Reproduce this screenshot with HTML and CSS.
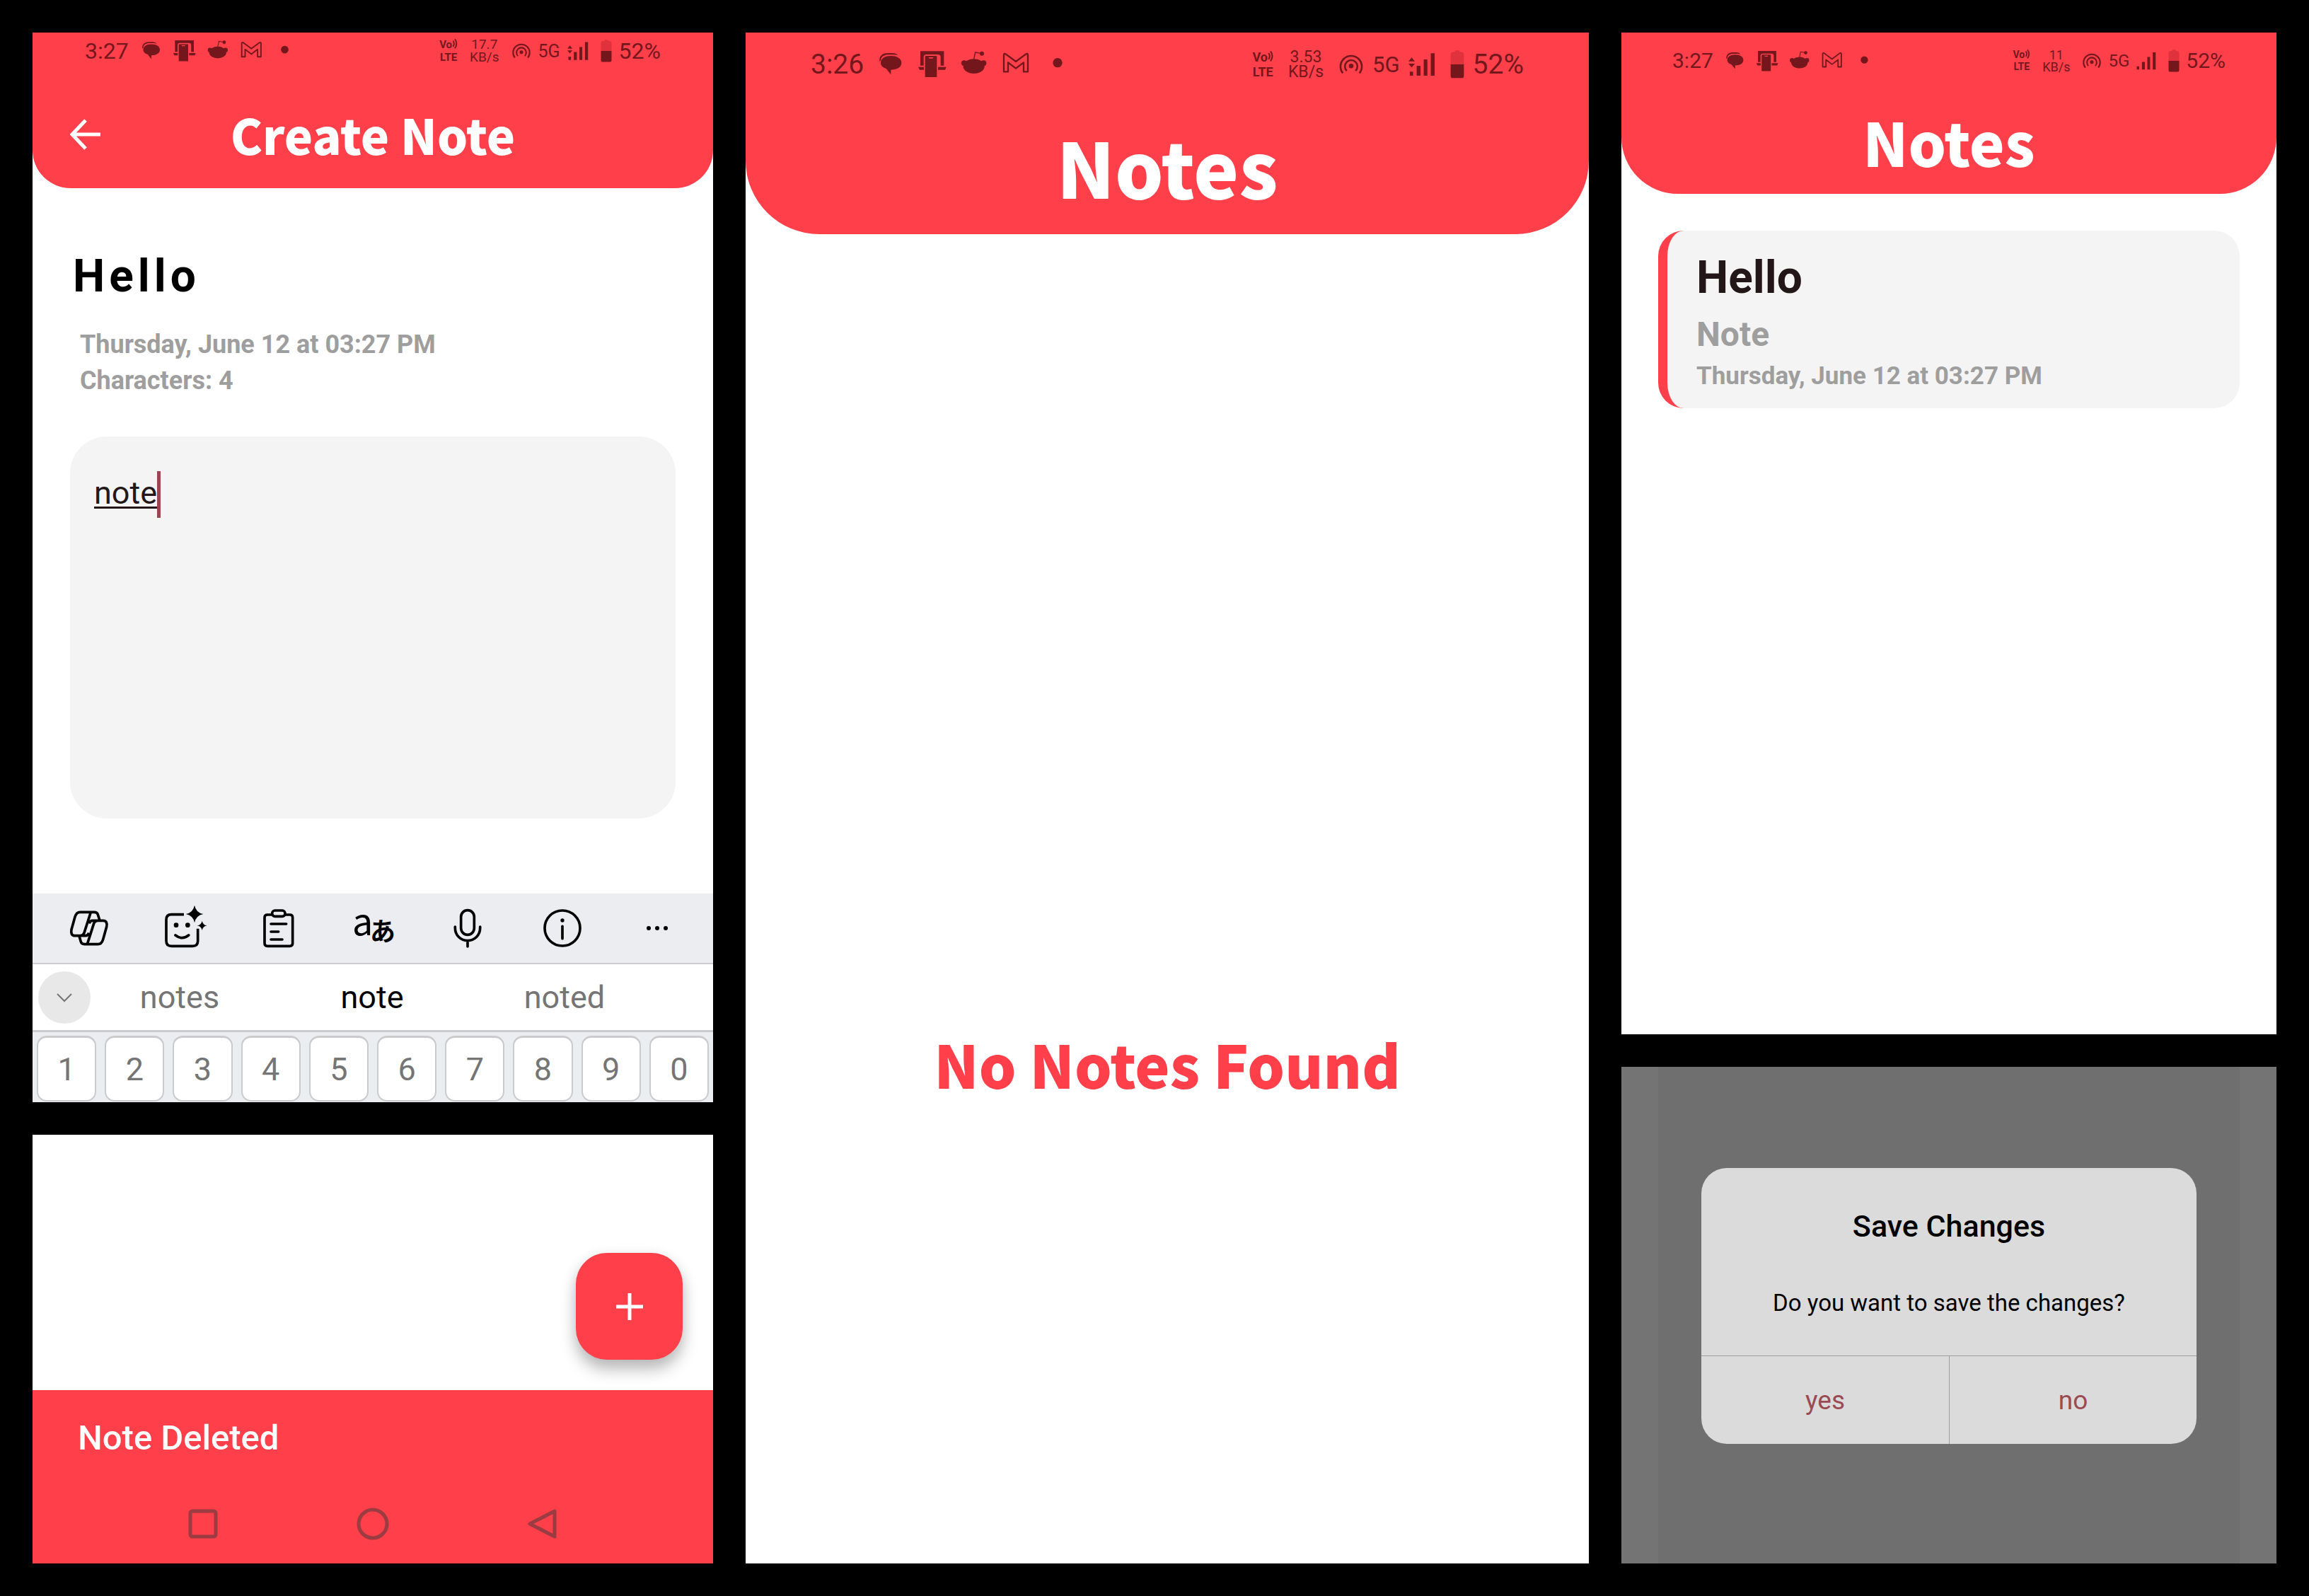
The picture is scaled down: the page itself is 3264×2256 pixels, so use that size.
FILE: index.html
```html
<!DOCTYPE html>
<html lang="en">
<head>
<meta charset="utf-8">
<title>Notes app screens</title>
<link rel="stylesheet" href="styles.css">
</head>
<body>
<svg class="sprite" aria-hidden="true">
  <symbol id="notifications" viewBox="312 36 783 120">
    <path d="M316 84C313 62 328 48 350 48H372Q387 49 394 58Q386 55 376 55H350C332 57 321 66 322 78Z"/>
    <path d="M364 60C392 60 409 72 409 90C409 107 392 119 364 119V139L344 114C328 109 321 100 321 90C321 72 336 60 364 60Z"/>
    <path d="M489 40H589V101H575V66Q575 54 563 54H515Q503 54 503 66V101H489ZM480 107H504V119H486ZM564 107H599L594 119H564Z"/>
    <path d="M512 60H556Q559 60 559 63V150H509V63Q509 60 512 60ZM524 66Q524 71 529 71H539Q544 71 544 66Z" fill-rule="evenodd"/>
    <ellipse cx="716" cy="104" rx="45" ry="31"/>
    <circle cx="675" cy="91" r="12"/><circle cx="757" cy="91" r="12"/><circle cx="750" cy="50" r="9"/>
    <path d="M716 74L722 45L746 49" fill="none" stroke="currentColor" stroke-width="4"/>
    <path d="M843 127V56Q843 49 851 52L894 84L937 52Q945 49 945 56V127H927V88L894 113L861 88V127Z" fill="none" stroke="currentColor" stroke-width="7" stroke-linejoin="round"/>
    <circle cx="1071" cy="89" r="20"/>
  </symbol>
  <symbol id="waves" viewBox="0 0 24 48">
    <path d="M4 12Q13 24 4 38M12 4Q27 24 12 46" fill="none" stroke="currentColor" stroke-width="6"/>
  </symbol>
  <symbol id="hotspot" viewBox="430 48 110 90">
    <circle cx="485" cy="100" r="10"/>
    <path d="M449 131A46 46 0 1 1 521 131M466 121A27 27 0 1 1 504 121" fill="none" stroke="currentColor" stroke-width="8"/>
  </symbol>
  <symbol id="signal" viewBox="714 38 118 102">
    <path d="M720 121H734V139H720ZM750 95H767V139H750ZM781 67H797V139H781ZM812 40H829V139H812Z"/>
  </symbol>
  <symbol id="signal-data" viewBox="714 38 118 102">
    <path d="M720 121H734V139H720ZM750 95H767V139H750ZM781 67H797V139H781ZM812 40H829V139H812ZM728 59L742 76H714ZM714 86H742L728 103Z"/>
  </symbol>
  <symbol id="battery" viewBox="892 28 62 124">
    <path d="M913 36V33Q913 29 917 29H929Q933 29 933 33V36H940Q952 36 952 48V92H894V48Q894 36 906 36Z" fill="#e0323c"/>
    <path d="M894 90H952V140Q952 150 942 150H904Q894 150 894 140Z"/>
  </symbol>
</svg>

<main class="board">
  <div class="stack">
    <section class="screen editor">
      <header class="header header-small">
        <div class="status">
          <span class="clock">3:27</span>
          <svg class="i-notes"><use href="#notifications"/></svg>
          <div class="status-end">
            <span class="tiny volte"><span>Vo<svg class="i-waves"><use href="#waves"/></svg></span><span>LTE</span></span>
            <span class="tiny speed"><span>17.7</span><span>KB/s</span></span>
            <span class="pair"><svg class="i-hotspot"><use href="#hotspot"/></svg><span class="gen">5G</span><svg class="i-signal"><use href="#signal-data"/></svg></span>
            <span class="pair"><svg class="i-battery"><use href="#battery"/></svg><span class="clock">52%</span></span>
          </div>
        </div>
        <div class="title-row">
          <button class="back" aria-label="Back"><svg viewBox="0 0 44 44"><path d="M43 22H4M22 2L3 22L22 42"/></svg></button>
          <h1>Create Note</h1>
        </div>
      </header>
      <div class="editor-body">
        <h2 class="note-title">Hello</h2>
        <p class="meta">Thursday, June 12 at 03:27 PM<br>Characters: 4</p>
        <div class="field">
          <textarea aria-label="Note text" spellcheck="false">note</textarea>
          <span class="caret"></span>
        </div>
      </div>
      <div class="keyboard">
        <div class="tools">
          <button aria-label="Copilot"><svg viewBox="45 66 180 180"><path d="M145 88L117 176Q113 188 101 188H78Q58 188 63 162L78 108Q84 88 100 88H160Q172 88 175 98L182 120M130 224L158 136Q162 124 174 124H197Q217 124 212 150L197 204Q191 224 175 224H118Q106 224 103 214L96 190M174 124H152Q142 124 138 136M101 188H123Q133 188 137 176"/></svg></button>
          <button aria-label="Stickers"><svg viewBox="447 66 180 180"><path d="M540 98H487Q465 98 465 120V210Q465 232 487 232H577Q599 232 599 210V158"/><path d="M504 186Q532 208 560 186" stroke-linecap="round"/><g class="solid"><circle cx="507" cy="143" r="10"/><circle cx="556" cy="143" r="10"/><path d="M585 59Q591 90 622 96Q591 102 585 133Q579 102 548 96Q579 90 585 59ZM617 125Q620 142 638 145Q620 148 617 165Q614 148 596 145Q614 142 617 125Z"/></g></svg></button>
          <button aria-label="Clipboard"><svg viewBox="849 66 180 180"><path d="M913 99H894Q882 99 882 111V220Q882 232 894 232H989Q1001 232 1001 220V111Q1001 99 989 99H969"/><rect x="914" y="81" width="55" height="25" rx="12"/><path d="M909 138H974M909 171H941M909 204H957" stroke-linecap="round"/></svg></button>
          <button aria-label="Translate"><svg viewBox="1251 66 180 180"><text class="latin" x="1254" y="187">a</text><text class="kana" x="1329" y="211">あ</text></svg></button>
          <button aria-label="Voice input"><svg viewBox="0 0 180 180"><rect x="62" y="14" width="56" height="104" rx="28"/><path d="M37 84V90A53 53 0 0 0 143 90V84M90 143V168" stroke-linecap="round"/></svg></button>
          <button aria-label="Information"><svg viewBox="0 0 180 180"><circle cx="90" cy="90" r="75"/><path d="M90 82V134" stroke-linecap="round"/><circle class="solid" cx="90" cy="57" r="8"/></svg></button>
          <button aria-label="More"><svg viewBox="0 0 180 180"><g class="solid"><circle cx="54" cy="90" r="9"/><circle cx="90" cy="90" r="9"/><circle cx="126" cy="90" r="9"/></g></svg></button>
        </div>
        <div class="suggestions">
          <button class="collapse" aria-label="Collapse"><svg viewBox="0 0 24 14"><path d="M2 2L12 12L22 2"/></svg></button>
          <button class="word">notes</button>
          <button class="word active">note</button>
          <button class="word">noted</button>
        </div>
        <div class="keys">
          <button>1</button><button>2</button><button>3</button><button>4</button><button>5</button>
          <button>6</button><button>7</button><button>8</button><button>9</button><button>0</button>
        </div>
      </div>
    </section>

    <section class="screen deleted">
      <div class="fab-area">
        <button class="fab" aria-label="Add note"><svg viewBox="0 0 38 38"><path d="M19 0V38M0 19H38"/></svg></button>
      </div>
      <footer class="snackbar">
        <p>Note Deleted</p>
        <nav class="system-nav">
          <button aria-label="Recent apps"><svg viewBox="0 0 48 48"><rect x="6" y="6" width="36" height="36" rx="3"/></svg></button>
          <button aria-label="Home"><svg viewBox="0 0 48 48"><circle cx="24" cy="24" r="20"/></svg></button>
          <button aria-label="Back"><svg viewBox="0 0 48 48"><path d="M40 6V42L5 24Z"/></svg></button>
        </nav>
      </footer>
    </section>
  </div>

  <section class="screen empty">
    <header class="header header-large">
      <div class="status">
        <span class="clock">3:26</span>
        <svg class="i-notes"><use href="#notifications"/></svg>
        <div class="status-end">
          <span class="tiny volte"><span>Vo<svg class="i-waves"><use href="#waves"/></svg></span><span>LTE</span></span>
          <span class="tiny speed"><span>3.53</span><span>KB/s</span></span>
          <span class="pair"><svg class="i-hotspot"><use href="#hotspot"/></svg><span class="gen">5G</span><svg class="i-signal"><use href="#signal-data"/></svg></span>
          <span class="pair"><svg class="i-battery"><use href="#battery"/></svg><span class="clock">52%</span></span>
        </div>
      </div>
      <div class="title-row"><h1>Notes</h1></div>
    </header>
    <p class="empty-text">No Notes Found</p>
  </section>

  <div class="stack">
    <section class="screen list">
      <header class="header header-medium">
        <div class="status">
          <span class="clock">3:27</span>
          <svg class="i-notes"><use href="#notifications"/></svg>
          <div class="status-end">
            <span class="tiny volte"><span>Vo<svg class="i-waves"><use href="#waves"/></svg></span><span>LTE</span></span>
            <span class="tiny speed"><span>11</span><span>KB/s</span></span>
            <span class="pair"><svg class="i-hotspot"><use href="#hotspot"/></svg><span class="gen">5G</span><svg class="i-signal"><use href="#signal"/></svg></span>
            <span class="pair"><svg class="i-battery"><use href="#battery"/></svg><span class="clock">52%</span></span>
          </div>
        </div>
        <div class="title-row"><h1>Notes</h1></div>
      </header>
      <article class="card">
        <h2>Hello</h2>
        <p class="excerpt">Note</p>
        <p class="date">Thursday, June 12 at 03:27 PM</p>
      </article>
    </section>

    <section class="screen confirm">
      <div class="backdrop">
        <div class="dialog" role="dialog" aria-labelledby="save-title">
          <div class="dialog-text">
            <h2 id="save-title">Save Changes</h2>
            <p>Do you want to save the changes?</p>
          </div>
          <div class="dialog-actions">
            <button>yes</button>
            <button>no</button>
          </div>
        </div>
      </div>
    </section>
  </div>
</main>
</body>
</html>
```
FILE: styles.css
```css
:root {
  --red: #ff3f4a;
  --status: #74171d;
  --gray: #9e9e9e;
  --key-line: #cbcbcd;
  --panel: #f4f4f4;
}

* { box-sizing: border-box; }

body {
  margin: 0;
  background: #000;
  color: #000;
  font-family: Roboto, "Liberation Sans", sans-serif;
}

h1, h2, p { margin: 0; }

button {
  margin: 0;
  padding: 0;
  border: 0;
  background: none;
  color: inherit;
  font: inherit;
}

svg { display: block; fill: currentColor; }

.sprite { display: none; }

.board {
  display: grid;
  grid-template-columns: 962fr 1192fr 926fr;
  gap: 46px;
  min-height: 100vh;
  padding: 46px;
}

.stack { display: flex; flex-direction: column; gap: 46px; }

.screen { display: flex; flex-direction: column; background: #fff; }

.deleted, .confirm { flex: 1; }

/* Headers and status bars */

.header {
  display: flex;
  flex-direction: column;
  background: var(--red);
  color: #fff;
}

.header-small {
  --clock: 32px; --tiny: 19px; --tiny-bold: 15px; --tiny-line: 18px; --gen: 25px;
  --gap: 17px; --gap-small: 10px;
  --notes-w: 211px; --notes-h: 32px; --hot-w: 28px; --hot-h: 24px;
  --sig-w: 30px; --sig-h: 26px; --bat-w: 16px; --bat-h: 32px;
  border-radius: 0 0 54px 54px;
}

.header-large {
  --clock: 39px; --tiny: 23px; --tiny-bold: 18px; --tiny-line: 21px; --gen: 31px;
  --gap: 21px; --gap-small: 12px;
  --notes-w: 261px; --notes-h: 40px; --hot-w: 36px; --hot-h: 30px;
  --sig-w: 38px; --sig-h: 34px; --bat-w: 20px; --bat-h: 40px;
  border-radius: 0 0 104px 104px;
}

.header-medium {
  --clock: 30px; --tiny: 18px; --tiny-bold: 14px; --tiny-line: 17px; --gen: 24px;
  --gap: 17px; --gap-small: 9px;
  --notes-w: 203px; --notes-h: 31px; --hot-w: 28px; --hot-h: 24px;
  --sig-w: 29px; --sig-h: 26px; --bat-w: 16px; --bat-h: 32px;
  border-radius: 0 0 80px 80px;
}

.status {
  display: flex;
  align-items: center;
  gap: var(--gap);
  color: var(--status);
}

.header-small .status { height: 52px; padding: 0 74px; }
.header-large .status { height: 90px; padding: 0 92px; }
.header-medium .status { height: 80px; padding: 0 72px; }

.status-end {
  display: flex;
  align-items: center;
  gap: var(--gap);
  margin-left: auto;
}

.clock { font-size: var(--clock); line-height: 1; }
.gen { font-size: var(--gen); line-height: 1; }
.pair { display: flex; align-items: center; gap: var(--gap-small); }

.tiny {
  display: flex;
  flex-direction: column;
  align-items: center;
  font-size: var(--tiny);
  line-height: var(--tiny-line);
}

.tiny > span { display: flex; }
.volte { font-size: var(--tiny-bold); font-weight: 700; }

.i-waves { width: 8px; height: var(--tiny-bold); }
.i-notes { width: var(--notes-w); height: var(--notes-h); }
.i-hotspot { width: var(--hot-w); height: var(--hot-h); }
.i-signal { width: var(--sig-w); height: var(--sig-h); }
.i-battery { width: var(--bat-w); height: var(--bat-h); }

.title-row {
  display: grid;
  grid-template-columns: 1fr auto 1fr;
  align-items: center;
}

.title-row h1 { grid-column: 2; }

h1, .empty-text {
  font-family: "Noto Sans CJK SC", "Liberation Sans", sans-serif;
  font-weight: 900;
}

.header-small .title-row { height: 168px; padding: 16px 53px 0; }
.header-large .title-row { height: 195px; }
.header-medium .title-row { height: 148px; }

.header-small h1 { font-size: 68px; line-height: 90px; }
.header-large h1 { font-size: 108px; line-height: 150px; }
.header-medium h1 { font-size: 84px; line-height: 120px; }

.back svg {
  width: 44px;
  height: 44px;
  fill: none;
  stroke: currentColor;
  stroke-width: 5;
}

/* Editor */

.editor-body {
  display: flex;
  flex-direction: column;
  padding: 87px 53px 106px;
}

.note-title {
  padding-left: 4px;
  font-size: 64px;
  line-height: 76px;
  letter-spacing: 6px;
}

.meta {
  margin-top: 33px;
  padding-left: 14px;
  color: var(--gray);
  font-size: 36px;
  font-weight: 700;
  line-height: 51px;
}

.field { position: relative; margin-top: 53px; }

textarea {
  display: block;
  width: 100%;
  height: 540px;
  padding: 53px 34px;
  border: 0;
  border-radius: 52px;
  outline: 0;
  resize: none;
  background: var(--panel);
  color: #231819;
  font: 45px/54px Roboto, "Liberation Sans", sans-serif;
  text-decoration: underline 3px;
  text-underline-offset: 4px;
}

.caret {
  position: absolute;
  top: 49px;
  left: 123px;
  width: 5px;
  height: 66px;
  background: #9b4550;
}

/* Keyboard */

.keyboard { background: #ecedf1; }

.tools {
  display: grid;
  grid-template-columns: repeat(7, 1fr);
  height: 100px;
  padding: 0 12px;
  border-bottom: 2px solid var(--key-line);
}

.tools button { display: grid; place-items: center; }

.tools svg {
  width: 60px;
  height: 60px;
  overflow: visible;
  fill: none;
  stroke: currentColor;
  stroke-width: 11;
}

.tools .solid { fill: currentColor; stroke: none; }
.tools text { fill: currentColor; stroke: none; }
.latin { font: 400 156px "Noto Sans CJK JP", sans-serif; }
.kana { font: 700 108px "Noto Sans CJK JP", sans-serif; }

.suggestions {
  display: grid;
  grid-template-columns: 54px 1fr 1fr 1fr;
  column-gap: 20px;
  align-items: center;
  height: 96px;
  padding: 0 84px 0 8px;
  border-bottom: 3px solid var(--key-line);
  background: #fff;
}

.collapse {
  display: grid;
  place-items: center;
  width: 74px;
  height: 74px;
  border-radius: 50%;
  background: #e8e8e8;
  color: #757575;
}

.collapse svg {
  width: 24px;
  height: 14px;
  fill: none;
  stroke: currentColor;
  stroke-width: 2;
}

.word { color: #757575; font-size: 45px; line-height: 54px; }
.word.active { color: #000; }

.keys {
  display: grid;
  grid-template-columns: repeat(10, 1fr);
  gap: 12px;
  padding: 5px 6px 1px;
}

.keys button {
  height: 93px;
  border: 2px solid var(--key-line);
  border-top-width: 3px;
  border-radius: 14px;
  background: #fff;
  color: #757575;
  font-size: 45px;
}

/* Deleted message */

.fab-area {
  display: flex;
  flex: 1;
  align-items: flex-end;
  justify-content: flex-end;
  padding: 43px;
}

.fab {
  display: grid;
  place-items: center;
  width: 151px;
  height: 151px;
  border-radius: 44px;
  background: var(--red);
  box-shadow: 0 14px 22px rgba(0, 0, 0, .26), 0 2px 20px rgba(0, 0, 0, .06);
  color: #fff;
}

.fab svg { width: 38px; height: 38px; stroke: currentColor; stroke-width: 5; }

.snackbar { background: var(--red); }

.snackbar p {
  padding: 36px 64px 0;
  color: #fff;
  font-size: 49px;
  font-weight: 500;
  line-height: 64px;
}

.system-nav {
  display: flex;
  justify-content: space-evenly;
  padding: 65px 24px 32px;
  color: #9b3b42;
}

.system-nav svg {
  width: 48px;
  height: 48px;
  fill: none;
  stroke: currentColor;
  stroke-width: 5;
  stroke-linejoin: round;
}

/* Empty list */

.empty-text {
  padding-top: 1112px;
  color: var(--red);
  font-size: 83px;
  line-height: 120px;
  text-align: center;
}

/* Note list */

.list { min-height: 1416px; }

.card {
  margin: 52px;
  padding: 31px 41px 25px;
  border-left: 13px solid var(--red);
  border-radius: 36px;
  background: var(--panel);
  color: var(--gray);
  font-weight: 700;
}

.card h2 { color: #231619; font-size: 64px; line-height: 72px; }
.excerpt { margin-top: 17px; font-size: 48px; line-height: 54px; }
.date { margin-top: 12px; font-size: 35px; line-height: 40px; }

/* Save dialog */

.confirm { background: #747474; }

.backdrop {
  display: grid;
  flex: 1;
  align-items: start;
  margin: 0 52px;
  padding: 143px 61px;
  background: #6f6f6f;
}

.dialog {
  overflow: hidden;
  border-radius: 36px;
  background: #dbdbdb;
  text-align: center;
}

.dialog-text { padding: 50px 40px 49px; }
.dialog h2 { font-size: 43px; font-weight: 500; line-height: 64px; }
.dialog p { margin-top: 53px; padding-bottom: 1px; font-size: 33px; line-height: 48px; }

.dialog-actions {
  display: grid;
  grid-template-columns: 1fr 1fr;
  border-top: 1px solid #9c9f9e;
}

.dialog-actions button {
  height: 124px;
  color: #9b4a52;
  font-size: 37px;
}

.dialog-actions button + button { border-left: 1px solid #9c9f9e; }
```
